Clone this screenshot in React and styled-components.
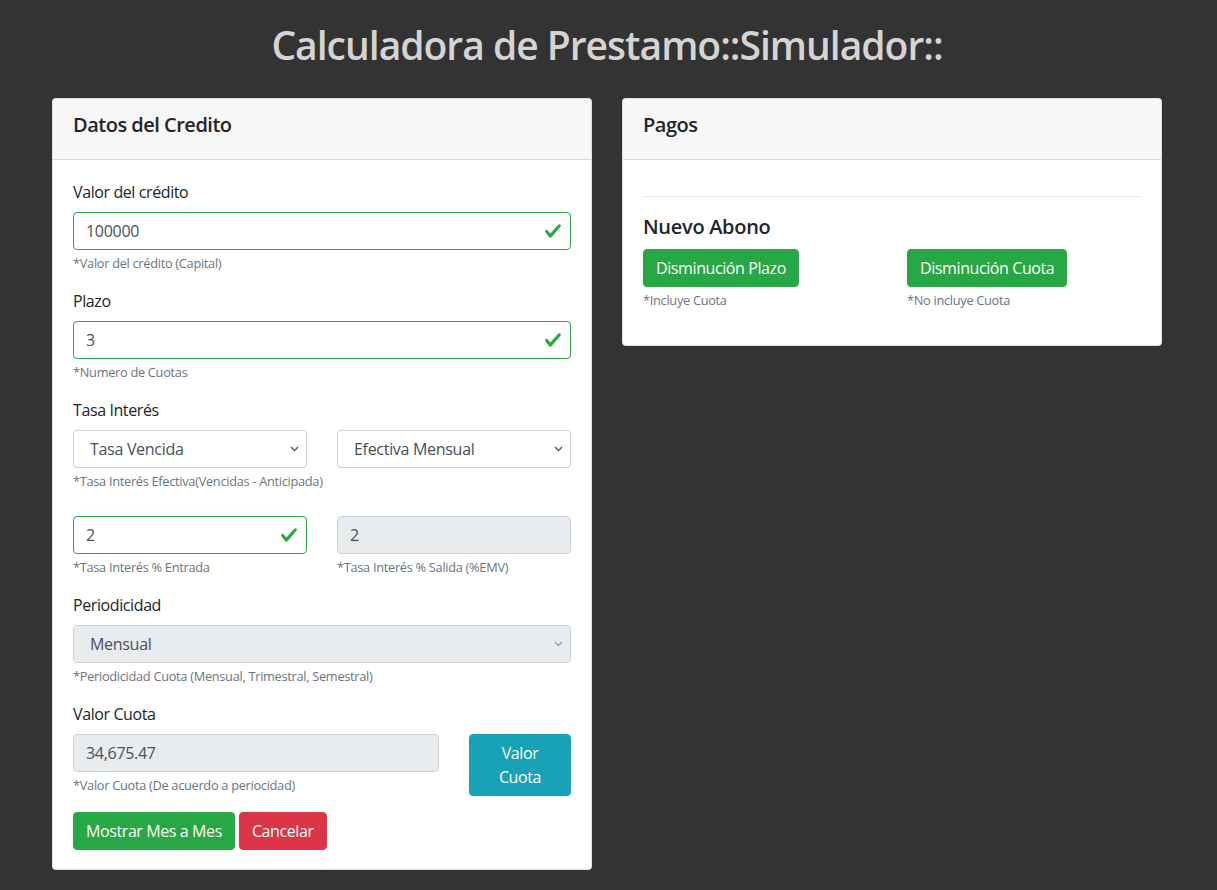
import React from "react";
import styled, { createGlobalStyle, css } from "styled-components";

const GlobalStyle = createGlobalStyle`
  html, body {
    margin: 0;
    background: #333333;
  }
  body {
    font-family: "Open Sans", "Noto Sans", Arial, sans-serif;
    font-size: 16px;
    line-height: 1.5;
    color: #212529;
  }
  * { box-sizing: border-box; }
`;

const Page = styled.div`
  padding: 21px 55px 20px 52px;
`;

const Title = styled.h1`
  margin: 0 0 29px;
  text-align: center;
  font-size: 39px;
  line-height: 48px;
  font-weight: 600;
  color: #d4d4d4;
  letter-spacing: -1px;
`;

const Columns = styled.div`
  display: grid;
  grid-template-columns: 1fr 1fr;
  gap: 30px;
  align-items: start;
`;

const Card = styled.section`
  background: #fff;
  border: 1px solid rgba(0, 0, 0, 0.125);
  border-radius: 4px;
  overflow: hidden;
`;

const CardHeader = styled.header`
  background: #f7f7f7;
  border-bottom: 1px solid rgba(0, 0, 0, 0.125);
  padding: 8px 20px 0;
  height: 61px;
`;

const CardTitle = styled.h5`
  margin: 0;
  font-size: 20px;
  line-height: 36px;
  font-weight: 600;
  color: #212529;
  letter-spacing: -0.5px;
`;

const CardBody = styled.div`
  padding: 20px 20px 19px;
`;

const FormGroup = styled.div`
  margin-bottom: ${(p) => p.$mb || 16}px;
`;

const Label = styled.label`
  display: block;
  margin-bottom: 8px;
  line-height: 24px;
  letter-spacing: -0.4px;
`;

const Row = styled.div`
  display: grid;
  grid-template-columns: ${(p) => p.$cols || "minmax(0, 1fr) minmax(0, 1fr)"};
  column-gap: 30px;
  align-items: start;
`;

const Field = styled.div`
  position: relative;
`;

const fieldBase = css`
  display: block;
  width: 100%;
  height: 38px;
  padding: 6px 12px;
  font-family: inherit;
  font-size: 16px;
  line-height: 24px;
  letter-spacing: -0.3px;
  color: #495057;
  background: ${(p) => (p.disabled ? "#e9ecef" : "#fff")};
  border: 1px solid ${(p) => (p.$valid ? "#28a745" : "#ced4da")};
  border-radius: 4px;
  outline: none;
  opacity: 1;

  &:disabled {
    color: #495057;
    -webkit-text-fill-color: #495057;
    opacity: 1;
  }
`;

const Input = styled.input`
  ${fieldBase}
  padding-right: ${(p) => (p.$valid ? "38px" : "12px")};
`;

const Select = styled.select`
  ${fieldBase}
  appearance: none;
  padding-left: 16px;
  padding-right: 30px;
`;

const CheckMark = styled.svg`
  position: absolute;
  right: 9px;
  top: 10px;
  width: 18px;
  height: 18px;
  pointer-events: none;
`;

const Chevron = styled.svg`
  position: absolute;
  right: 8px;
  top: 16px;
  width: 9px;
  height: 6px;
  pointer-events: none;
`;

const Help = styled.small`
  display: block;
  margin-top: 4px;
  font-size: 12.8px;
  line-height: 19.2px;
  color: #6c757d;
  letter-spacing: -0.3px;
  white-space: nowrap;
`;

const variants = {
  success: "#28a745",
  danger: "#dc3545",
  info: "#17a2b8",
};

const Button = styled.button`
  display: inline-block;
  padding: 6px 12px;
  font-family: inherit;
  font-size: 16px;
  line-height: 24px;
  letter-spacing: -0.4px;
  color: #fff;
  background: ${(p) => variants[p.$variant]};
  border: 1px solid ${(p) => variants[p.$variant]};
  border-radius: 4px;
  text-align: center;
  cursor: pointer;
  width: ${(p) => (p.$block ? "100%" : "auto")};
`;

const Actions = styled.div`
  display: flex;
  gap: 4px;
`;

const Divider = styled.hr`
  margin: 16px 0;
  border: 0;
  border-top: 1px solid rgba(0, 0, 0, 0.1);
`;

const SubTitle = styled.h4`
  margin: 0 0 8px;
  font-size: 20px;
  line-height: 28px;
  font-weight: 600;
  color: #212529;
  letter-spacing: -0.3px;
`;

const Check = () => (
  <CheckMark viewBox="0 0 8 8">
    <path
      fill="#28a745"
      d="M2.3 6.73L.6 4.53c-.4-1.04.46-1.4 1.1-.8l1.1 1.4 3.4-3.8c.6-.63 1.6-.27 1.2.7l-4 4.6c-.43.5-.8.4-1.1.1z"
    />
  </CheckMark>
);

const TextField = ({ value, valid, disabled }) => (
  <Field>
    <Input defaultValue={value} $valid={valid} disabled={disabled} readOnly />
    {valid && <Check />}
  </Field>
);

const SelectField = ({ options, disabled }) => (
  <Field>
    <Select disabled={disabled} defaultValue={options[0]}>
      {options.map((o) => (
        <option key={o}>{o}</option>
      ))}
    </Select>
    <Chevron viewBox="0 0 9 6">
      <path d="M1 1l3.5 3.5L8 1" fill="none" stroke={disabled ? "#9aa0a6" : "#555"} strokeWidth="1.3" />
    </Chevron>
  </Field>
);

export default function App() {
  return (
    <Page>
      <GlobalStyle />
      <Title>Calculadora de Prestamo::Simulador::</Title>
      <Columns>
        <Card>
          <CardHeader>
            <CardTitle>Datos del Credito</CardTitle>
          </CardHeader>
          <CardBody>
            <FormGroup>
              <Label>Valor del crédito</Label>
              <TextField value="100000" valid />
              <Help>*Valor del crédito (Capital)</Help>
            </FormGroup>
            <FormGroup>
              <Label>Plazo</Label>
              <TextField value="3" valid />
              <Help>*Numero de Cuotas</Help>
            </FormGroup>
            <FormGroup $mb={24}>
              <Label>Tasa Interés</Label>
              <Row>
                <div>
                  <SelectField options={["Tasa Vencida", "Tasa Anticipada"]} />
                  <Help>*Tasa Interés Efectiva(Vencidas - Anticipada)</Help>
                </div>
                <SelectField options={["Efectiva Mensual", "Efectiva Anual"]} />
              </Row>
            </FormGroup>
            <FormGroup>
              <Row>
                <div>
                  <TextField value="2" valid />
                  <Help>*Tasa Interés % Entrada</Help>
                </div>
                <div>
                  <TextField value="2" disabled />
                  <Help>*Tasa Interés % Salida (%EMV)</Help>
                </div>
              </Row>
            </FormGroup>
            <FormGroup>
              <Label>Periodicidad</Label>
              <SelectField options={["Mensual", "Trimestral", "Semestral"]} disabled />
              <Help>*Periodicidad Cuota (Mensual, Trimestral, Semestral)</Help>
            </FormGroup>
            <FormGroup>
              <Label>Valor Cuota</Label>
              <Row $cols="366px 102px">
                <div>
                  <TextField value="34,675.47" disabled />
                  <Help>*Valor Cuota (De acuerdo a periocidad)</Help>
                </div>
                <Button $variant="info" $block>
                  Valor Cuota
                </Button>
              </Row>
            </FormGroup>
            <Actions>
              <Button $variant="success">Mostrar Mes a Mes</Button>
              <Button $variant="danger">Cancelar</Button>
            </Actions>
          </CardBody>
        </Card>

        <Card>
          <CardHeader>
            <CardTitle>Pagos</CardTitle>
          </CardHeader>
          <CardBody>
            <Divider />
            <SubTitle>Nuevo Abono</SubTitle>
            <FormGroup>
              <Row>
                <div>
                  <Button $variant="success">Disminución Plazo</Button>
                  <Help>*Incluye Cuota</Help>
                </div>
                <div>
                  <Button $variant="success">Disminución Cuota</Button>
                  <Help>*No incluye Cuota</Help>
                </div>
              </Row>
            </FormGroup>
          </CardBody>
        </Card>
      </Columns>
    </Page>
  );
}
